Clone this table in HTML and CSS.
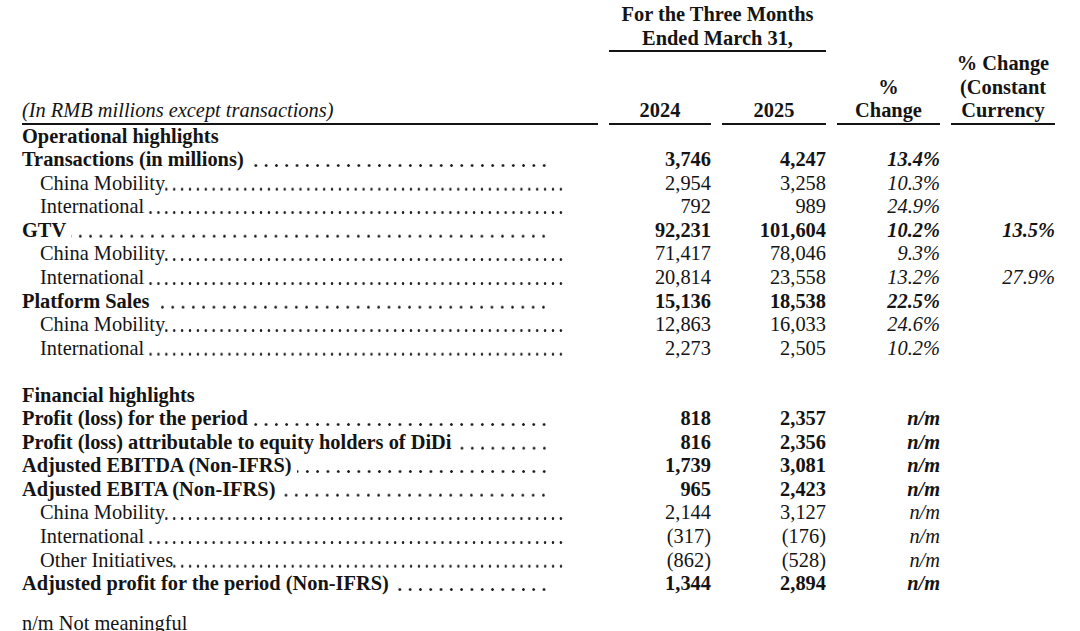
FILE: index.html
```html
<!DOCTYPE html>
<html lang="en">
<head>
<meta charset="utf-8">
<title>Operational and Financial Highlights</title>
<link rel="stylesheet" href="styles.css">
</head>
<body>
<div class="sheet">
  <div class="table">
    <div class="period">For the Three Months<br>Ended March 31,</div>

    <div class="hd hd-label">(In RMB millions except transactions)</div>
    <div class="hd">2024</div>
    <div class="hd">2025</div>
    <div class="hd">%<br>Change</div>
    <div class="hd">% Change<br>(Constant<br>Currency</div>

    <div class="row bold">
      <div class="lbl"><span class="t">Operational highlights</span></div>
      <div></div><div></div><div></div><div></div>
    </div>
    <div class="row bold">
      <div class="lbl"><span class="t">Transactions (in millions)</span><span class="lead"></span></div>
      <div class="num">3,746</div><div class="num">4,247</div><div class="num pct">13.4%</div><div></div>
    </div>
    <div class="row sub">
      <div class="lbl"><span class="t">China Mobility</span><span class="lead"></span></div>
      <div class="num">2,954</div><div class="num">3,258</div><div class="num pct">10.3%</div><div></div>
    </div>
    <div class="row sub">
      <div class="lbl"><span class="t">International</span><span class="lead"></span></div>
      <div class="num">792</div><div class="num">989</div><div class="num pct">24.9%</div><div></div>
    </div>
    <div class="row bold">
      <div class="lbl"><span class="t">GTV</span><span class="lead"></span></div>
      <div class="num">92,231</div><div class="num">101,604</div><div class="num pct">10.2%</div><div class="num pct">13.5%</div>
    </div>
    <div class="row sub">
      <div class="lbl"><span class="t">China Mobility</span><span class="lead"></span></div>
      <div class="num">71,417</div><div class="num">78,046</div><div class="num pct">9.3%</div><div></div>
    </div>
    <div class="row sub">
      <div class="lbl"><span class="t">International</span><span class="lead"></span></div>
      <div class="num">20,814</div><div class="num">23,558</div><div class="num pct">13.2%</div><div class="num pct">27.9%</div>
    </div>
    <div class="row bold">
      <div class="lbl"><span class="t">Platform Sales</span><span class="lead"></span></div>
      <div class="num">15,136</div><div class="num">18,538</div><div class="num pct">22.5%</div><div></div>
    </div>
    <div class="row sub">
      <div class="lbl"><span class="t">China Mobility</span><span class="lead"></span></div>
      <div class="num">12,863</div><div class="num">16,033</div><div class="num pct">24.6%</div><div></div>
    </div>
    <div class="row sub">
      <div class="lbl"><span class="t">International</span><span class="lead"></span></div>
      <div class="num">2,273</div><div class="num">2,505</div><div class="num pct">10.2%</div><div></div>
    </div>

    <div class="spacer"></div>

    <div class="row bold">
      <div class="lbl"><span class="t">Financial highlights</span></div>
      <div></div><div></div><div></div><div></div>
    </div>
    <div class="row bold">
      <div class="lbl"><span class="t">Profit (loss) for the period</span><span class="lead"></span></div>
      <div class="num">818</div><div class="num">2,357</div><div class="num pct">n/m</div><div></div>
    </div>
    <div class="row bold">
      <div class="lbl"><span class="t">Profit (loss) attributable to equity holders of DiDi</span><span class="lead"></span></div>
      <div class="num">816</div><div class="num">2,356</div><div class="num pct">n/m</div><div></div>
    </div>
    <div class="row bold">
      <div class="lbl"><span class="t">Adjusted EBITDA (Non-IFRS)</span><span class="lead"></span></div>
      <div class="num">1,739</div><div class="num">3,081</div><div class="num pct">n/m</div><div></div>
    </div>
    <div class="row bold">
      <div class="lbl"><span class="t">Adjusted EBITA (Non-IFRS)</span><span class="lead"></span></div>
      <div class="num">965</div><div class="num">2,423</div><div class="num pct">n/m</div><div></div>
    </div>
    <div class="row sub">
      <div class="lbl"><span class="t">China Mobility</span><span class="lead"></span></div>
      <div class="num">2,144</div><div class="num">3,127</div><div class="num pct">n/m</div><div></div>
    </div>
    <div class="row sub">
      <div class="lbl"><span class="t">International</span><span class="lead"></span></div>
      <div class="num">(317)</div><div class="num">(176)</div><div class="num pct">n/m</div><div></div>
    </div>
    <div class="row sub">
      <div class="lbl"><span class="t">Other Initiatives</span><span class="lead"></span></div>
      <div class="num">(862)</div><div class="num">(528)</div><div class="num pct">n/m</div><div></div>
    </div>
    <div class="row bold">
      <div class="lbl"><span class="t">Adjusted profit for the period (Non-IFRS)</span><span class="lead"></span></div>
      <div class="num">1,344</div><div class="num">2,894</div><div class="num pct">n/m</div><div></div>
    </div>
  </div>
  <p class="note">n/m Not meaningful</p>
</div>
</body>
</html>
```

FILE: styles.css
```css
html, body {
  margin: 0;
  padding: 0;
  background: #ffffff;
}

body {
  font-family: "Liberation Serif", "Times New Roman", serif;
  font-size: 20.4px;
  line-height: 23.55px;
  color: #141414;
}

.sheet {
  padding: 3px 0 0 22px;
}

.table {
  display: grid;
  grid-template-columns: 576px 102px 104px 103px 104px;
  column-gap: 11px;
}

.period {
  grid-column: 2 / 4;
  text-align: center;
  font-weight: bold;
  border-bottom: 2px solid #141414;
}

.hd {
  align-self: end;
  text-align: center;
  font-weight: bold;
  border-bottom: 2px solid #141414;
}

.hd-label {
  grid-column: 1;
  text-align: left;
  font-weight: normal;
  font-style: italic;
}

.row {
  display: contents;
}

.row.bold > * {
  font-weight: bold;
}

.lbl {
  display: flex;
  white-space: nowrap;
  padding-right: 49px;
}

.row.sub .lbl {
  padding-left: 18px;
  padding-right: 33px;
}

.lbl .t {
  flex: none;
}

.lead {
  flex: 1 1 0;
  min-width: 0;
  margin-left: 0;
  background-image: radial-gradient(circle at 50% 17.2px, #1c1c1c 0, #1c1c1c 1px, rgba(28, 28, 28, 0) 1.6px);
  background-size: 7.9px 23.55px;
  background-repeat: repeat-x;
  background-position: right top;
}

.row.bold .lead {
  margin-left: 5px;
  background-size: 10.3px 23.55px;
}

.num {
  text-align: right;
}

.pct {
  font-style: italic;
}

.spacer {
  grid-column: 1 / -1;
  height: 23.55px;
}

.note {
  margin: 16px 0 0 0;
}
```
